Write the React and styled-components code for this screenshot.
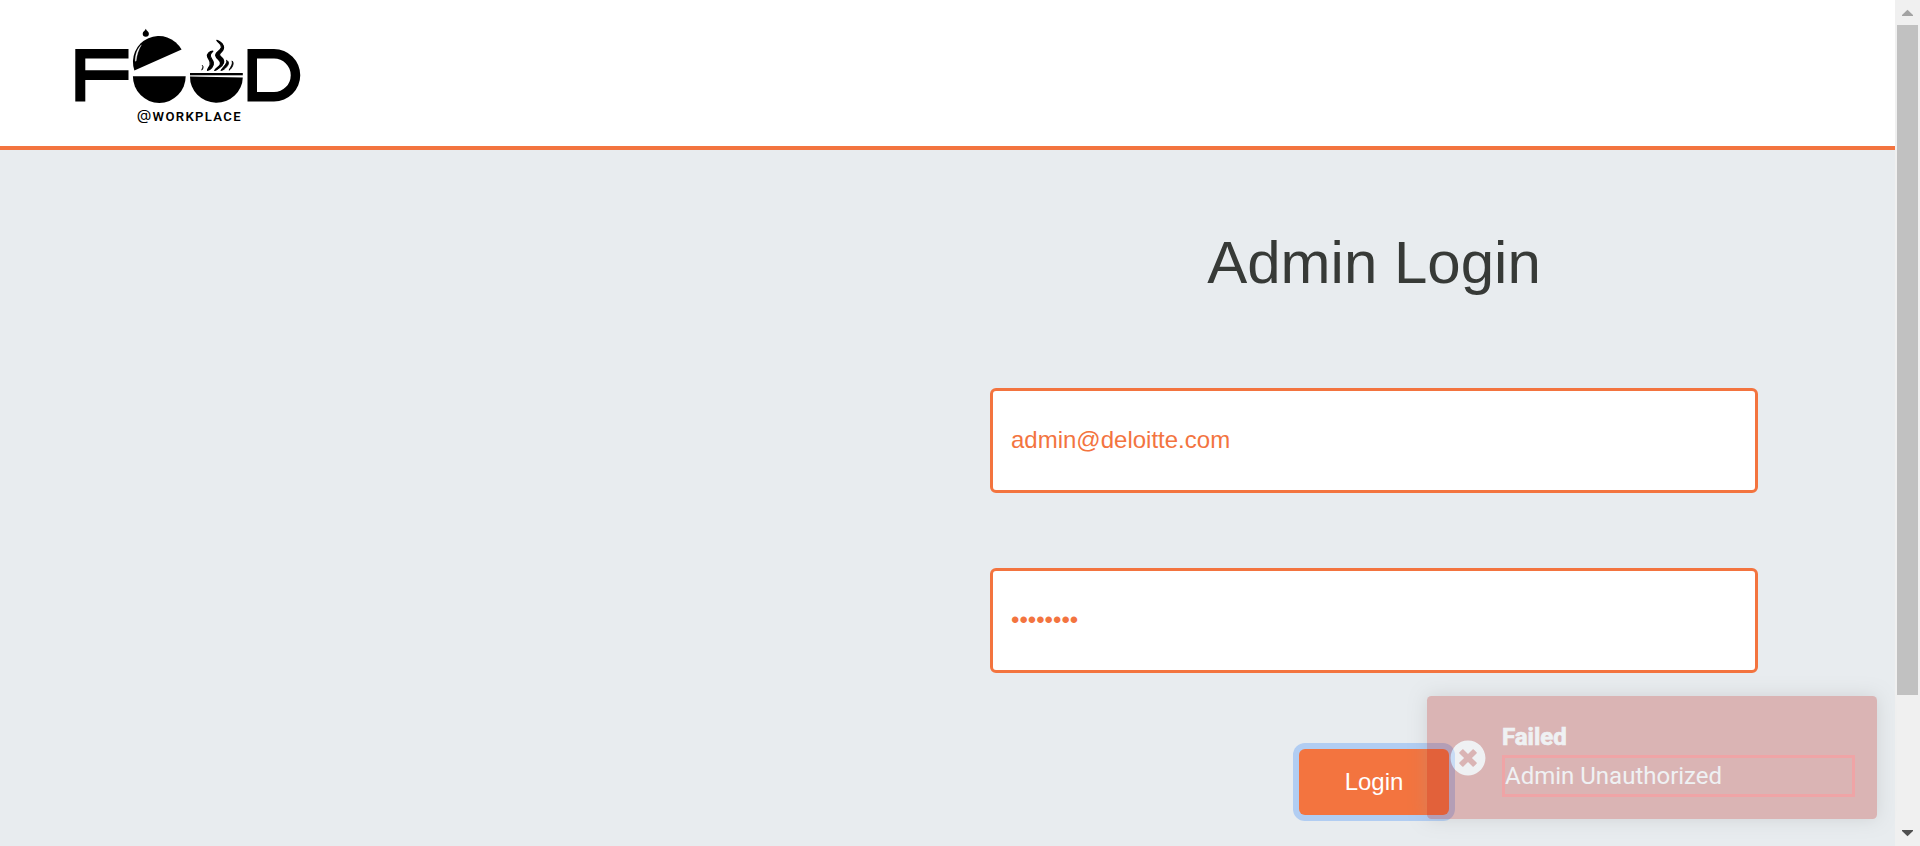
import React from "react";
import styled, { createGlobalStyle } from "styled-components";
import { FaTimesCircle } from "react-icons/fa";

const GlobalStyle = createGlobalStyle`
  *, *::before, *::after { box-sizing: border-box; }
  body {
    margin: 0;
    overflow: hidden;
    font-family: "Liberation Sans", Arial, sans-serif;
  }
`;

const Window = styled.div`
  position: relative;
  display: flex;
  height: 846px;
  background: #e8ecef;
  overflow: hidden;
`;

const Page = styled.div`
  flex: 1;
  display: flex;
  flex-direction: column;
`;

const Header = styled.header`
  height: 150px;
  padding: 20px 0 0 70px;
  background: #fff;
  border-bottom: 4px solid #f3743f;
`;

const LogoArt = styled.svg`
  display: block;
`;

const Main = styled.main`
  display: flex;
  justify-content: flex-end;
  padding-right: 137px;
`;

const LoginForm = styled.form`
  display: flex;
  flex-direction: column;
  align-items: center;
  width: 768px;
`;

const Title = styled.h1`
  margin: 77px 0 89px;
  font-size: 60px;
  font-weight: 400;
  line-height: 72px;
  color: #373a37;
`;

const Field = styled.input`
  width: 100%;
  height: 105px;
  margin-bottom: 75px;
  padding: 0 18px 2px;
  border: 3px solid #f3743f;
  border-radius: 6px;
  outline: none;
  background: #fff;
  color: #f3743f;
  font: 24px/36px "Liberation Sans", Arial, sans-serif;
`;

const LoginButton = styled.button`
  width: 150px;
  height: 66px;
  margin-top: 1px;
  padding: 0;
  border: 0;
  border-radius: 6px;
  background: #f3743f;
  box-shadow: 0 0 0 6px rgba(13, 110, 253, 0.25);
  color: #fff;
  font: 24px/36px "Liberation Sans", Arial, sans-serif;
`;

const Toast = styled.div`
  position: absolute;
  right: 43px;
  bottom: 27px;
  display: flex;
  align-items: center;
  gap: 16px;
  width: 450px;
  height: 123px;
  padding: 0 22px 0 23px;
  border-radius: 4.5px;
  background: #bd362f;
  box-shadow: 0 0 18px #999;
  opacity: 0.3;
  color: #fff;
  font: 24px/36px Roboto, sans-serif;
`;

const ToastBody = styled.div`
  flex: 1;
`;

const ToastTitle = styled.div`
  font-weight: 700;
  -webkit-text-stroke: 0.7px #fff;
`;

const ToastMessage = styled.div`
  border: 3px solid #f00;
`;

const ScrollTrack = styled.div`
  display: flex;
  flex-direction: column;
  align-items: center;
  justify-content: space-between;
  width: 25px;
  background: #f0f0f0;
`;

const ScrollThumb = styled.div`
  width: 21px;
  height: 670px;
  margin-bottom: auto;
  background: #c1c1c1;
`;

const ScrollArrow = styled.svg`
  display: block;
  width: 25px;
  height: 25px;
  fill: ${(p) => p.$color};
`;

function Logo() {
  return (
    <LogoArt width="240" height="110" viewBox="70 20 240 110" aria-label="Food @workplace">
      {/* outer letter shapes of the wordmark */}
      <path d="M75.3 49H128.5V58.6H85.3V70.3H128.5V80H85.3V101.5H75.3Z" />
      <path fillRule="evenodd" d="M247.5 49H274a26.25 26.25 0 0 1 0 52.5H247.5ZM257 58.5V92H274a16.75 16.75 0 0 0 0-33.5Z" />
      {/* cloche lid */}
      <path d="M134.4 70.4A25.87 25.87 0 0 1 181.6 49.6Z" />
      <path d="M135.3 61.2C135.1 54.5 137.5 48.6 141.4 44.8C138.6 49.5 136.8 54.8 136.1 61Z" fill="#fff" stroke="#fff" strokeWidth="0.3" />
      <path d="M145.8 28.8C146.5 31 148.9 31.5 148.9 33.7A3.1 3 0 0 1 142.7 33.7C142.7 31.5 145 31 145.8 28.8Z" />
      {/* bowls */}
      <path d="M132.9 76.3H185.7A26.4 26.6 0 0 1 132.9 76.3Z" />
      <rect x="190" y="73" width="52.8" height="2.3" />
      <path d="M190 76.4L242.8 77.5A26.4 25.8 0 0 1 190 76.4Z" />
      {/* steam */}
      <g stroke="#000" strokeWidth="1.2" strokeLinejoin="round">
        <path d="M216.8 40.3C218 43 222.2 43.8 221.4 47.5C220.4 51.5 215.1 51.8 215.6 55.4C216.4 59.5 221.6 59.7 220.4 64.3C219.2 67.4 215.9 67.5 214.7 70.5C217.1 70.2 216.6 69.5 219 68C224 65 225.1 60.7 221.8 57.7C218.8 55.2 218.8 54.4 221.5 51.8C225.6 47.4 222.8 43.6 219.8 41.8C218.2 40.8 217.4 40.6 216.8 40.3Z" />
        <path d="M212.8 51.2C209.9 51.2 206.4 53.7 207.7 57.1C209.3 60.6 211.2 61.3 210.1 65C209.4 67.4 208.1 67.1 207.5 70.4C210.4 70.1 214.1 66.2 213.3 62.5C212.6 59 209.3 57.3 210.4 54.5C211 52.9 212 51.9 212.8 51.2Z" />
        <path strokeWidth="0.9" d="M226.5 60.3C227.6 63.5 223.4 66.5 220.9 70.5C223.6 70.3 225.2 68.4 226.8 66.6C229.2 63.8 229 61.6 226.5 60.3Z" />
        <path strokeWidth="0.9" d="M232 60.9C233.3 64 230.8 66.3 229.1 70.2C232 68.3 234.7 62.9 232 60.9Z" />
        <path strokeWidth="0.6" d="M202.1 65.1C204 67 201.8 68.5 201.7 70.2C203.5 69 203.6 66.5 202.1 65.1Z" />
      </g>
      <text x="136.7" y="120.2" fontFamily="Inter, sans-serif" fontSize="14.8" textLength="14.6" lengthAdjust="spacingAndGlyphs">@</text>
      <text x="152.6" y="121.4" fontFamily="Roboto, sans-serif" fontWeight="600" fontSize="13.1" textLength="88" lengthAdjust="spacing">WORKPLACE</text>
    </LogoArt>
  );
}

export default function App() {
  return (
    <>
      <GlobalStyle />
      <Window>
        <Page>
          <Header>
            <Logo />
          </Header>
          <Main>
            <LoginForm onSubmit={(e) => e.preventDefault()}>
              <Title>Admin Login</Title>
              <Field type="text" aria-label="Email" defaultValue="admin@deloitte.com" />
              <Field type="password" aria-label="Password" defaultValue="password" />
              <LoginButton type="submit">Login</LoginButton>
            </LoginForm>
          </Main>
        </Page>
        <ScrollTrack>
          <ScrollArrow $color="#a3a3a3" viewBox="0 0 25 25">
            <path d="M7 16V15L12.5 9.7L18 15V16Z" />
          </ScrollArrow>
          <ScrollThumb />
          <ScrollArrow $color="#505050" viewBox="0 0 25 25">
            <path d="M7 9V10L12.5 15.3L18 10V9Z" />
          </ScrollArrow>
        </ScrollTrack>
        <Toast role="alert">
          <FaTimesCircle size={36} />
          <ToastBody>
            <ToastTitle>Failed</ToastTitle>
            <ToastMessage>Admin Unauthorized</ToastMessage>
          </ToastBody>
        </Toast>
      </Window>
    </>
  );
}
